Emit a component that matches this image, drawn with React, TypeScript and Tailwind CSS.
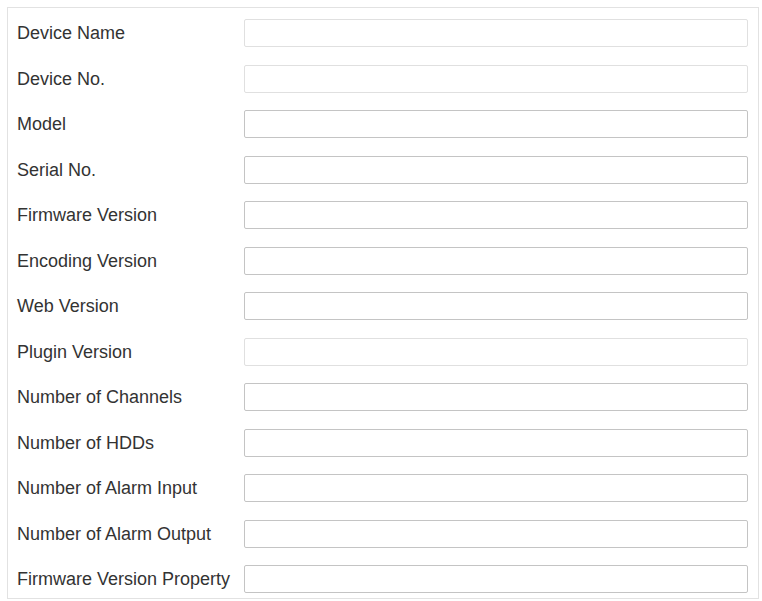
import React from 'react';

interface Field {
  label: string;
  light?: boolean;
}

const fields: Field[] = [
  { label: 'Device Name', light: true },
  { label: 'Device No.', light: true },
  { label: 'Model' },
  { label: 'Serial No.' },
  { label: 'Firmware Version' },
  { label: 'Encoding Version' },
  { label: 'Web Version' },
  { label: 'Plugin Version', light: true },
  { label: 'Number of Channels' },
  { label: 'Number of HDDs' },
  { label: 'Number of Alarm Input' },
  { label: 'Number of Alarm Output' },
  { label: 'Firmware Version Property' }
];

const App: React.FC = () => {
  return (
    <div className="w-[762px] h-[601px] bg-white pt-[7px] pl-[7px] font-['Liberation_Sans',Arial,sans-serif]">
      <div className="w-[752px] h-[592px] border border-[#e2e2e2] pt-[11px] pl-[9px] pr-[10px] flex flex-col gap-[17.5px]">
        {fields.map(field => (
          <div key={field.label} className="flex items-center h-[28px]">
            <span className="w-[227px] shrink-0 text-[18px] leading-none text-[#333] whitespace-nowrap">
              {field.label}
            </span>
            <input
              type="text"
              readOnly
              className={
                field.light
                  ? 'w-[505px] h-[28px] border border-[#e0e0e0] rounded-[2px] bg-white outline-none'
                  : 'w-[505px] h-[28px] border border-[#c4c4c4] rounded-[2px] bg-white outline-none'
              }
            />
          </div>
        ))}
      </div>
    </div>
  );
};

export default App;
